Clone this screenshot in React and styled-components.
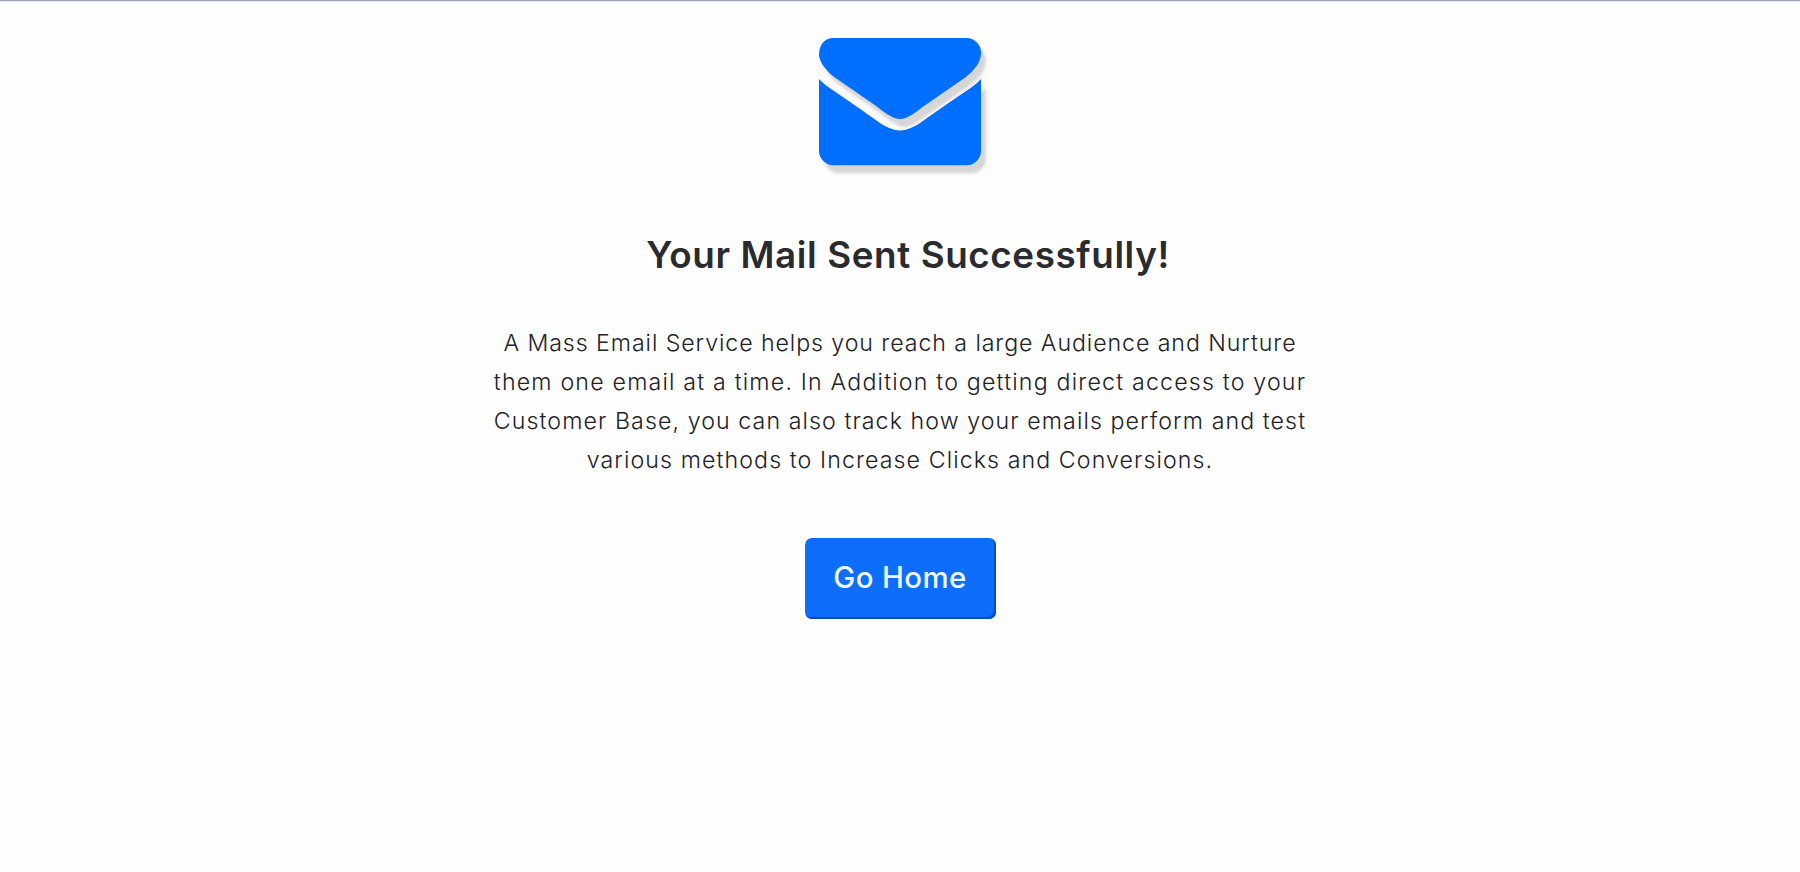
import React from "react";
import styled, { createGlobalStyle } from "styled-components";

const GlobalStyle = createGlobalStyle`
  body {
    margin: 0;
    background: #fefefe;
    color: #292b2e;
    font-family: Inter, "Liberation Sans", sans-serif;
  }
`;

const Page = styled.main`
  box-sizing: border-box;
  height: 872px;
  border-top: 1px solid #9aa3b8;
  box-shadow: inset 0 1px 0 #e4e8f6;
  padding-top: 37px;
  display: flex;
  flex-direction: column;
  align-items: center;
`;

const MailIcon = styled.svg`
  width: 162px;
  height: 127.3px;
  overflow: visible;
  fill: #006fff;
  filter: drop-shadow(5px 8px 1.5px #d6d6d6);
`;

const Title = styled.h1`
  margin: 65px 0 0 16px;
  font-size: 36.8px;
  line-height: 50px;
  font-weight: 600;
  white-space: nowrap;
  letter-spacing: ${(p) => p.$spacing}px;
`;

const Message = styled.p`
  margin: 44px 0 0;
  font-size: 23.2px;
  font-weight: 300;
  line-height: 39px;
  text-align: center;
  color: #202226;
`;

const Line = styled.span`
  display: block;
  white-space: nowrap;
  letter-spacing: ${(p) => p.$spacing}px;
`;

const HomeButton = styled.button`
  margin-top: 58px;
  width: 191px;
  height: 81px;
  padding: 0 0 2px;
  border: 0;
  border-radius: 7px;
  background: #0d6efd;
  box-shadow: inset -2px -2px 1px #084cb8;
  color: #eef8ff;
  font-family: inherit;
  font-size: 29.4px;
  font-weight: 500;
  letter-spacing: 0.4px;
`;

const lines = [
  { text: "A Mass Email Service helps you reach a large Audience and Nurture", spacing: 0.91 },
  { text: "them one email at a time. In Addition to getting direct access to your", spacing: 1.18 },
  { text: "Customer Base, you can also track how your emails perform and test", spacing: 1.07 },
  { text: "various methods to Increase Clicks and Conversions.", spacing: 1.08 },
];

export default function App() {
  return (
    <>
      <GlobalStyle />
      <Page>
        <MailIcon viewBox="0 256 1792 1408" aria-hidden="true">
          <path d="M1792 710v794q0 66-47 113t-113 47h-1472q-66 0-113-47t-47-113v-794q44 49 101 87 362 246 497 345 57 42 92.5 65.5t94.5 48 110 24.5h2q51 0 110-24.5t94.5-48 92.5-65.5q170-123 498-345 57-39 100-87zM1792 416q0 79-49 151t-122 123q-376 261-468 325-10 7-42.5 31t-54 38.8-52 32.5-57.5 27-50 9h-2q-23 0-50-9t-57.5-27-52-32.5-54-38.8-42.5-31q-91-64-262-182.5t-205-142.5q-62-42-117-115.5t-55-136.5q0-78 41.5-130t118.5-52h1472q65 0 112.5 47t47.5 113z" />
        </MailIcon>
        <Title $spacing={0.6}>Your Mail Sent Successfully!</Title>
        <Message>
          {lines.map((line) => (
            <Line key={line.text} $spacing={line.spacing}>{line.text}</Line>
          ))}
        </Message>
        <HomeButton type="button">Go Home</HomeButton>
      </Page>
    </>
  );
}
